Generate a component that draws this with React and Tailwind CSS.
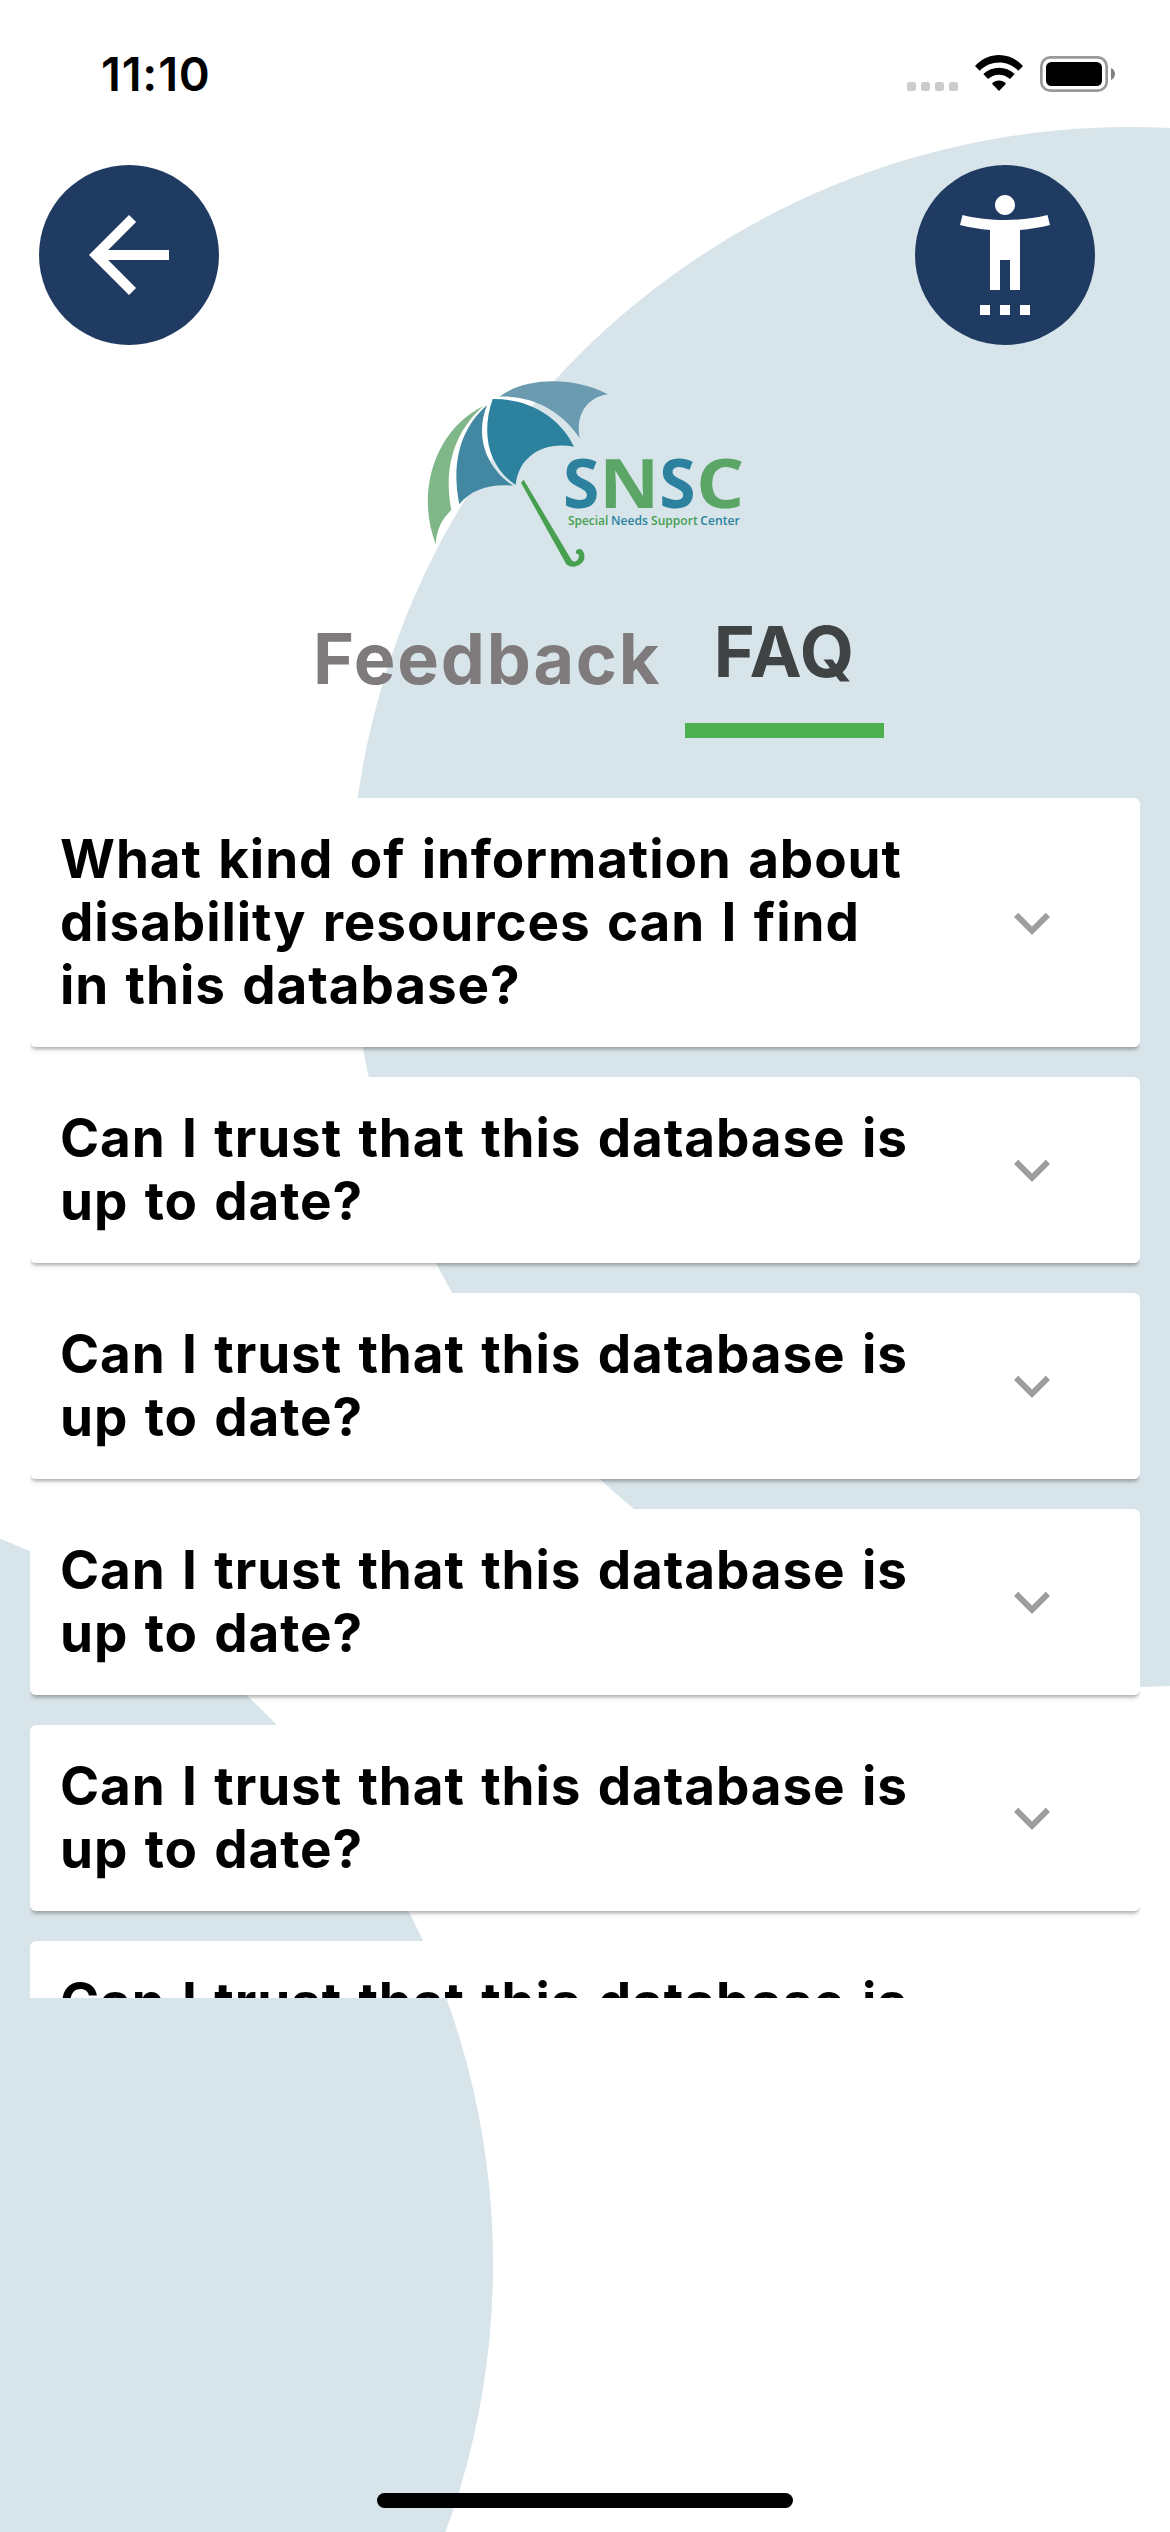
const repeated = "Can I trust that this database is\nup to date?";

const questions = [
  "What kind of information about\ndisability resources can I find\nin this database?",
  repeated,
  repeated,
  repeated,
  repeated,
  repeated,
];

function StatusBar() {
  return (
    <div className="flex h-[165px] items-start justify-between pr-[55px] pl-[101px]">
      <div className="mt-[46px] text-[47px] leading-[56px] font-semibold tracking-[0.8px]">11:10</div>
      <div className="mt-[55px] flex h-[37px] items-start">
        <div className="mt-[27px] flex gap-[5px]">
          {[0, 1, 2, 3].map((i) => (
            <span key={i} className="size-[9px] rounded-[2.5px] bg-[#cccccc]" />
          ))}
        </div>
        <svg className="ml-[17px] h-[36px] w-[48px]" viewBox="0 0 144 108">
          <path d="M0 33C40-11 104-11 144 33L130 47C97 14 47 14 14 47Z" />
          <path d="M25 57C52 32 92 32 119 57L105 72C85 55 59 55 39 72Z" />
          <path d="M51 86C62 73 82 73 93 86L72 108Z" />
        </svg>
        <svg className="mt-px ml-[17px] h-[36px] w-[75px]" viewBox="0 0 225 108">
          <rect x="4" y="4" width="196" height="100" rx="27" fill="none" stroke="#999999" strokeWidth="8" />
          <rect x="18" y="18" width="168" height="72" rx="16" />
          <path d="M213 36C229 42 229 66 213 72Z" fill="#808080" />
        </svg>
      </div>
    </div>
  );
}

function RoundButton({ label, children }) {
  return (
    <button aria-label={label} className="flex size-[180px] items-center justify-center rounded-full bg-[#1f3b61]">
      <svg className="size-[120px]" viewBox="0 0 24 24" fill="#ffffff">
        {children}
      </svg>
    </button>
  );
}

function Logo() {
  return (
    <svg className="mt-[15px] ml-[410px] h-[220px] w-[350px]" viewBox="0 0 1050 660">
      <path d="M268 110C350 50 490 50 594 103C530 112 496 165 509 234C460 160 375 105 268 110Z" fill="#6a9bb0" />
      <path d="M248 117C355 115 450 170 492 260C400 242 325 290 317 375C235 320 212 220 248 117Z" fill="#2c829e" />
      <path d="M231 136C195 225 225 320 309 377C240 370 180 390 148 433C125 320 145 210 231 136Z" fill="#4288a3" />
      <path d="M221 138C80 205 15 390 77 552C80 508 96 477 124 450C100 330 130 215 221 138Z" fill="#80b788" />
      <path d="M333 368L341 359L485 601C497 612 510 597 506 583L499 581C494 572 503 565 512 567C524 573 526 594 520 603C510 619 483 627 469 613Z" fill="#479f50" />
      <g fontFamily="'Open Sans', sans-serif" fontWeight="700">
        <g fontSize="205">
          <text x="459" y="443" fill="#2c829e" textLength="109" lengthAdjust="spacingAndGlyphs">S</text>
          <text x="568" y="443" fill="#5ba566" textLength="180" lengthAdjust="spacingAndGlyphs">N</text>
          <text x="748" y="443" fill="#2c829e" textLength="109" lengthAdjust="spacingAndGlyphs">S</text>
          <text x="858" y="443" fill="#5ba566" textLength="145" lengthAdjust="spacingAndGlyphs">C</text>
        </g>
        <g fontSize="36" fontWeight="600">
          <text x="474" y="495" fill="#479f50" textLength="121" lengthAdjust="spacingAndGlyphs">Special</text>
          <text x="603" y="495" fill="#2c829e" textLength="111" lengthAdjust="spacingAndGlyphs">Needs</text>
          <text x="723" y="495" fill="#479f50" textLength="140" lengthAdjust="spacingAndGlyphs">Support</text>
          <text x="871" y="495" fill="#2c829e" textLength="118" lengthAdjust="spacingAndGlyphs">Center</text>
        </g>
      </g>
    </svg>
  );
}

function Tabs() {
  return (
    <div className="flex h-[218px] items-start pt-[27px] pl-[313px]">
      <div className="mt-[10px] w-[372px] text-[70px] leading-[84px] font-bold tracking-[1.8px] text-[#7f7b7c]">
        Feedback
      </div>
      <div className="flex h-[131px] w-[199px] flex-col items-center border-b-[15px] border-[#4caf50] pt-[3px] text-[70px] leading-[84px] font-bold tracking-[1px] text-[#3f4344]">
        FAQ
      </div>
    </div>
  );
}

function Question({ text }) {
  return (
    <div className="flex shrink-0 items-center justify-between rounded-[6px] bg-white py-[30px] pr-[72px] pl-[30px] shadow-[0_5px_3px_-3px_rgba(0,0,0,0.14),0_3px_3px_0_rgba(0,0,0,0.1),0_3px_6px_0_rgba(0,0,0,0.08)]">
      <div className="text-[53px] leading-[63px] font-bold tracking-[0.9px] whitespace-pre [word-spacing:3px]">
        {text}
      </div>
      <svg className="size-[72px]" viewBox="0 0 24 24" fill="#9e9e9e">
        <path d="M7.41 8.59L12 13.17l4.59-4.58L18 10l-6 6-6-6z" />
      </svg>
    </div>
  );
}

export default function App() {
  return (
    <div className="relative h-[2532px] w-[1170px] overflow-hidden bg-white font-['Inter',sans-serif] text-black">
      <div className="absolute top-[127px] left-[350px] size-[1560px] rounded-full bg-[#d7e4ea]" />
      <div className="absolute top-[1484px] left-[-1067px] size-[1560px] rounded-full bg-[#d7e4ea]" />
      <div className="relative flex h-full flex-col">
        <StatusBar />
        <div className="flex justify-between pr-[75px] pl-[39px]">
          <RoundButton label="Back">
            <path d="M20 11H7.83l5.59-5.59L12 4l-8 8 8 8 1.41-1.41L7.83 13H20v-2z" />
          </RoundButton>
          <RoundButton label="Accessibility settings">
            <path d="M20.5 4c-2.61.7-5.67 1-8.5 1s-5.89-.3-8.5-1L3 6c1.86.5 4 .83 6 1v12h2v-6h2v6h2V7c2-.17 4.14-.5 6-1l-.5-2zM12 4c1.1 0 2-.9 2-2s-.9-2-2-2-2 .9-2 2 .9 2 2 2zM7 24h2v-2H7v2zM11 24h2v-2h-2v2zM15 24h2v-2h-2v2z" />
          </RoundButton>
        </div>
        <Logo />
        <Tabs />
        <div className="mx-[30px] flex h-[1200px] flex-col gap-[30px] overflow-hidden">
          {questions.map((q, i) => (
            <Question key={i} text={q} />
          ))}
        </div>
        <div className="mt-auto mb-[24px] h-[15px] w-[416px] self-center rounded-full bg-black" />
      </div>
    </div>
  );
}
